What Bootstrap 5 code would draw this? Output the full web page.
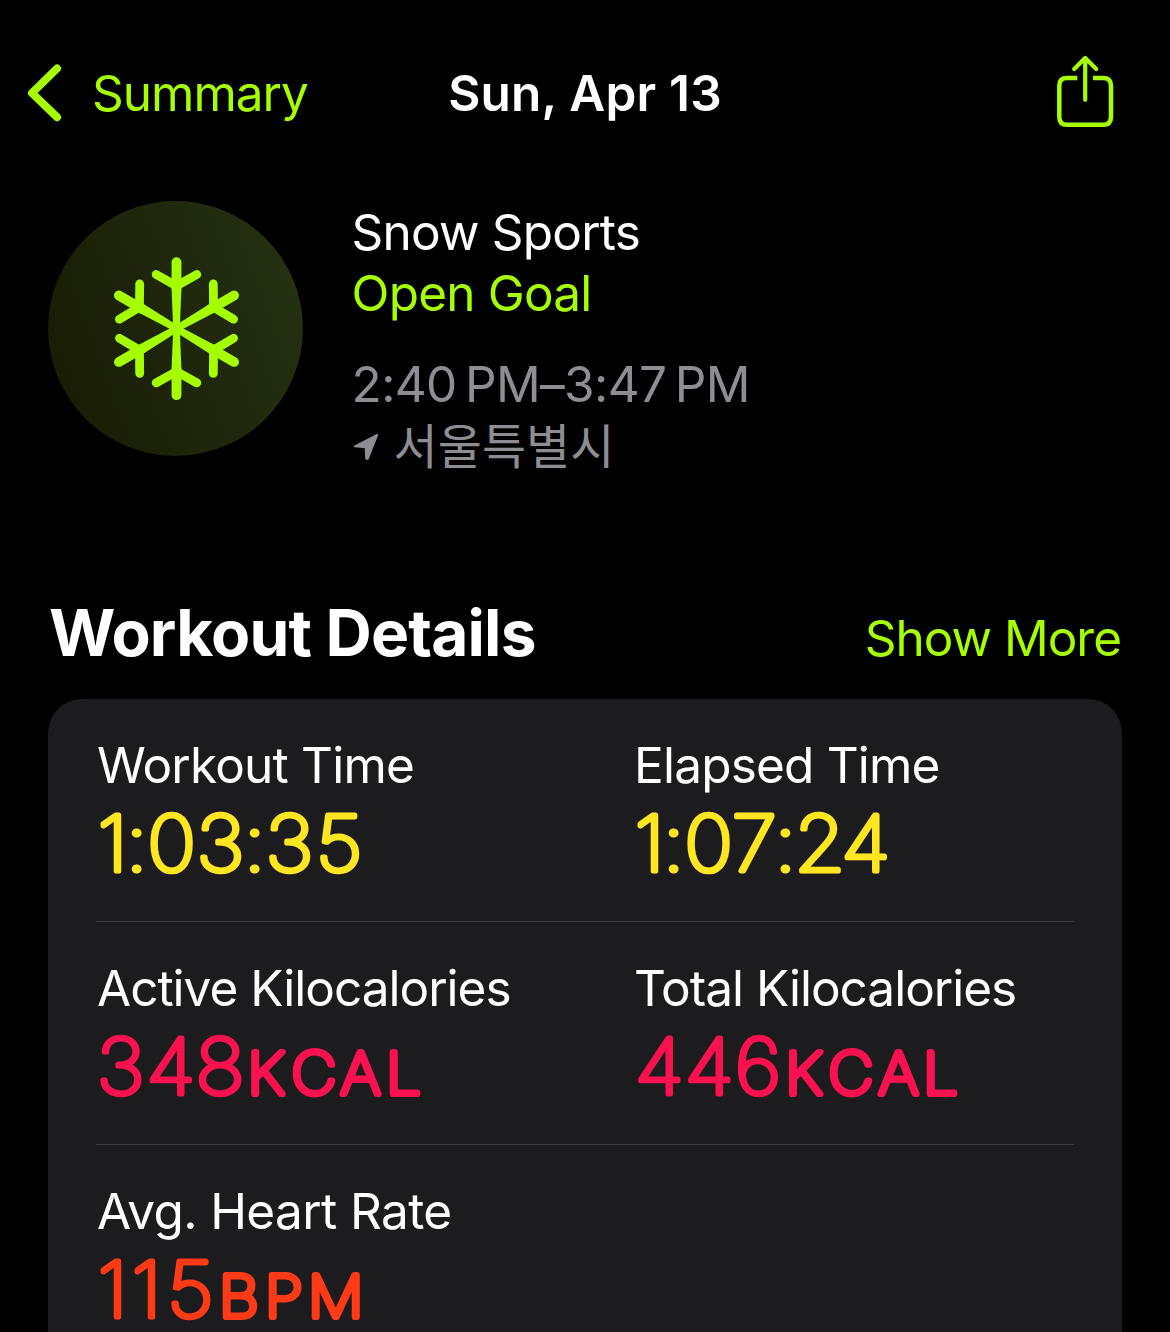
<!DOCTYPE html>
<html lang="en">
<head>
<meta charset="utf-8">
<meta name="viewport" content="width=device-width, initial-scale=1">
<title>Workout Summary</title>
<link rel="stylesheet" href="https://cdn.jsdelivr.net/npm/bootstrap@5.3.0/dist/css/bootstrap.min.css">
<style>
:root{--lime:#a6ff00;--muted:#8e8d93;--panel:#1c1c1e}
html,body{height:1332px;overflow:hidden}
body{background:#000;color:#fff;font-family:Inter,"Noto Sans CJK KR",sans-serif;font-size:49.5px;line-height:61px;letter-spacing:-.8px}
.lime{color:var(--lime)}
.dim{color:var(--muted)}
svg{display:block;flex:none;overflow:visible}
.topbar{padding:63px 0 0;height:124px}
.topbar>div{flex:1 1 0;min-width:0}
.back svg{margin-left:27px}
.share svg{margin-right:56px}
.topbar h1{font-size:49.5px;line-height:61px;font-weight:600;letter-spacing:.2px}
.hero{padding:77px 48px 0;gap:48.6px;height:352px}
.info{padding-top:1px}
.times{margin-top:30px;letter-spacing:-.65px}
.disc{width:255px;height:255px;background:linear-gradient(70deg,#171a02,#1e260c 50%,#263314)}
.place{font-family:"Noto Sans CJK KR",sans-serif;font-weight:400;font-size:48px;line-height:56px;letter-spacing:0;margin-bottom:5px}
.section-head{padding:126px 49px 0 49px;height:223px}
.section-head h2{font-size:64px;line-height:61px;font-weight:700;letter-spacing:-.8px}
.tight{letter-spacing:-1px}
.loose{letter-spacing:-.6px}
.panel{margin:0 48px;background:var(--panel);border-radius:34px 34px 0 0;height:640px}
.metric{padding:36px 0 0 49px;height:222px}
.rule{height:1px;background:#3d3d40;margin:0 48px}
.value text{font-family:Inter,sans-serif;font-weight:100;font-size:77px;letter-spacing:0;text-anchor:middle;stroke-width:5.2px;stroke-linejoin:round;stroke-linecap:round;transform:scaleX(1.07)}
.value .unit{font-size:58px;stroke-width:6.2px}
.t-yellow{fill:#ffe620;stroke:#ffe620}
.t-pink{fill:#fa114f;stroke:#fa114f}
.t-red{fill:#ff3a17;stroke:#ff3a17}
</style>
</head>
<body>
<header class="topbar d-flex align-items-center">
  <div class="back d-flex align-items-center lime tight">
    <svg width="65" height="61" viewBox="27 63 65 61" fill="none" stroke="currentColor" stroke-width="8" stroke-linecap="round" stroke-linejoin="round"><path d="M57 68.500 32 93l25 24.200"/></svg>
    <span>Summary</span>
  </div>
  <h1 class="mb-0 text-nowrap">Sun, Apr 13</h1>
  <div class="share d-flex justify-content-end lime">
    <svg width="58" height="61" viewBox="1056 63 58 61" fill="none" stroke="currentColor" stroke-width="4.500" stroke-linecap="round" stroke-linejoin="round"><path stroke-linecap="butt" d="M1077.300 78H1067Q1059.300 78 1059.300 85.700V117Q1059.300 124.800 1067 124.800H1103Q1111 124.800 1111 117V85.700Q1111 78 1103 78H1093"/><path d="M1085.200 99.800V58.500M1074.200 69 1085.200 58 1096.200 69" stroke-width="4.200"/></svg>
  </div>
</header>

<section class="hero d-flex align-items-start">
  <div class="disc rounded-circle flex-shrink-0 lime">
    <svg width="255" height="255" viewBox="0 0 255 255">
      <defs><g id="arm"><path fill="currentColor" d="M-3.300 0-4.900-40H4.900L3.300 0z"/><path fill="none" stroke="currentColor" stroke-linecap="round" stroke-width="9.800" d="M0-40V-66.500"/><path fill="none" stroke="currentColor" stroke-linecap="round" stroke-width="8.800" d="M-20.300-54.200 0-42.800 20.300-54.200"/></g></defs>
      <g transform="translate(128.500 127.700)"><use href="#arm"/><use href="#arm" transform="rotate(60)"/><use href="#arm" transform="rotate(120)"/><use href="#arm" transform="rotate(180)"/><use href="#arm" transform="rotate(240)"/><use href="#arm" transform="rotate(300)"/></g>
    </svg>
  </div>
  <div class="info text-nowrap">
    <div>Snow Sports</div>
    <div class="lime">Open Goal</div>
    <div class="dim times">2:40&#8239;PM–3:47&#8239;PM</div>
    <div class="dim d-flex align-items-center">
      <svg width="42" height="61" viewBox="351.600 415.500 42 61" fill="currentColor" stroke="currentColor" stroke-width="2" stroke-linejoin="round"><path d="M354.500 446.800 376.800 435.500 367.300 459.300H365.800L365.300 447.800z"/></svg>
      <span class="place" lang="ko">서울특별시</span>
    </div>
  </div>
</section>

<section class="section-head d-flex justify-content-between align-items-baseline">
  <h2 class="mb-0">Workout Details</h2>
  <span class="lime tight">Show More</span>
</section>

<main class="panel">
  <div class="row g-0">
    <div class="col-6 metric"><div>Workout Time</div>
      <svg class="value t-yellow" width="440" height="90"><text y="75.400" x="14.700 37.100 69.800 115.400 147.300 179.900 226.400">1:03:35</text></svg></div>
    <div class="col-6 metric"><div>Elapsed Time</div>
      <svg class="value t-yellow" width="440" height="90"><text y="75.400" x="14.700 37.100 69.800 112.400 141.400 173.600 216.700">1:07:24</text></svg></div>
  </div>
  <div class="rule"></div>
  <div class="row g-0">
    <div class="col-6 metric tight"><div>Active Kilocalories</div>
      <svg class="value t-pink" width="440" height="90"><text y="75.400" x="22.200 68.900 115.100">348</text><text class="unit" y="75" x="157.900 202.700 246.300 286.500">KCAL</text></svg></div>
    <div class="col-6 metric tight"><div>Total Kilocalories</div>
      <svg class="value t-pink" width="440" height="90"><text y="75.400" x="23.600 70.400 115.900">446</text><text class="unit" y="75" x="158.700 202.700 247.200 286.500">KCAL</text></svg></div>
  </div>
  <div class="rule"></div>
  <div class="row g-0">
    <div class="col-6 metric loose"><div>Avg. Heart Rate</div>
      <svg class="value t-red" width="440" height="90"><text y="75.400" x="14.700 46.300 87.300">115</text><text class="unit" y="75" x="132.500 174.500 223.200">BPM</text></svg></div>
  </div>
</main>
<script src="https://cdn.jsdelivr.net/npm/bootstrap@5.3.0/dist/js/bootstrap.bundle.min.js"></script>
</body>
</html>
